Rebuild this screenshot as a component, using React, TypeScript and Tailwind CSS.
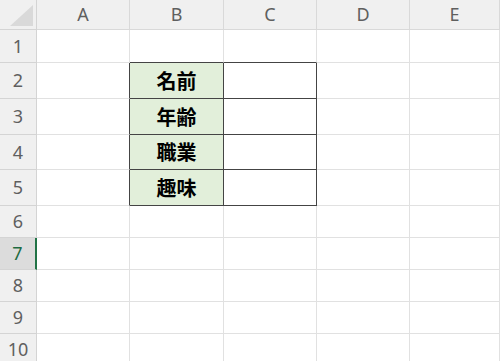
import React from "react";

const cols = ["A", "B", "C", "D", "E"];
const rowsH = [33, 36, 36, 35, 36, 32, 32, 32, 32, 32];
const labels: Record<number, string> = { 2: "名前", 3: "年齢", 4: "職業", 5: "趣味" };

export default function App() {
  const hdrFont = { fontFamily: '"Noto Sans", "Liberation Sans", sans-serif' };
  return (
    <div className="w-[500px] h-[361px] overflow-hidden bg-white">
      <div
        className="grid"
        style={{
          gridTemplateColumns: "37px 93px 94px 93px 93px 90px",
          gridTemplateRows: `30px ${rowsH.map((h) => h + "px").join(" ")}`,
        }}
      >
        {/* corner */}
        <div className="bg-[#f0f0f0] border-r border-b border-[#d4d4d4] relative">
          <svg width="36" height="29" className="absolute left-0 top-0">
            <polygon points="10,26 33,26 33,5" fill="#d9d9d9" />
          </svg>
        </div>
        {cols.map((c) => (
          <div
            key={c}
            className="bg-[#f0f0f0] border-r border-b border-[#d9d9d9] flex items-center justify-center text-[18px] text-[#5f5f5f]"
            style={hdrFont}
          >
            {c}
          </div>
        ))}
        {rowsH.map((_, i) => {
          const r = i + 1;
          const inTable = r >= 2 && r <= 5;
          const sel = r === 7;
          return (
            <React.Fragment key={r}>
              <div
                className={
                  sel
                    ? "bg-[#dcdcdc] border-b border-[#d4d4d4] border-r-2 border-r-[#217346] flex items-center justify-center text-[18px] text-[#1e6b41]"
                    : "bg-[#f0f0f0] border-r border-b border-[#d4d4d4] flex items-center justify-center text-[18px] text-[#5f5f5f]"
                }
                style={hdrFont}
              >
                {r}
              </div>
              {/* A */}
              <div
                className={
                  inTable
                    ? "border-b border-[#e1e1e1] border-r border-r-[#444444]"
                    : "border-r border-b border-[#e1e1e1]"
                }
              />
              {/* B */}
              <div
                className={
                  inTable
                    ? "bg-[#e2efda] border-r border-b border-[#444444] flex items-center justify-center text-[20px] font-bold text-black"
                    : r === 1
                    ? "border-r border-[#e1e1e1] border-b border-b-[#444444]"
                    : "border-r border-b border-[#e1e1e1]"
                }
                style={{ fontFamily: '"Noto Sans CJK JP", sans-serif' }}
              >
                {inTable ? labels[r] : null}
              </div>
              {/* C */}
              <div
                className={
                  inTable
                    ? "border-r border-b border-[#444444]"
                    : r === 1
                    ? "border-r border-[#e1e1e1] border-b border-b-[#444444]"
                    : "border-r border-b border-[#e1e1e1]"
                }
              />
              {/* D */}
              <div className="border-r border-b border-[#e1e1e1]" />
              {/* E */}
              <div className="border-r border-b border-[#e1e1e1]" />
            </React.Fragment>
          );
        })}
      </div>
    </div>
  );
}
